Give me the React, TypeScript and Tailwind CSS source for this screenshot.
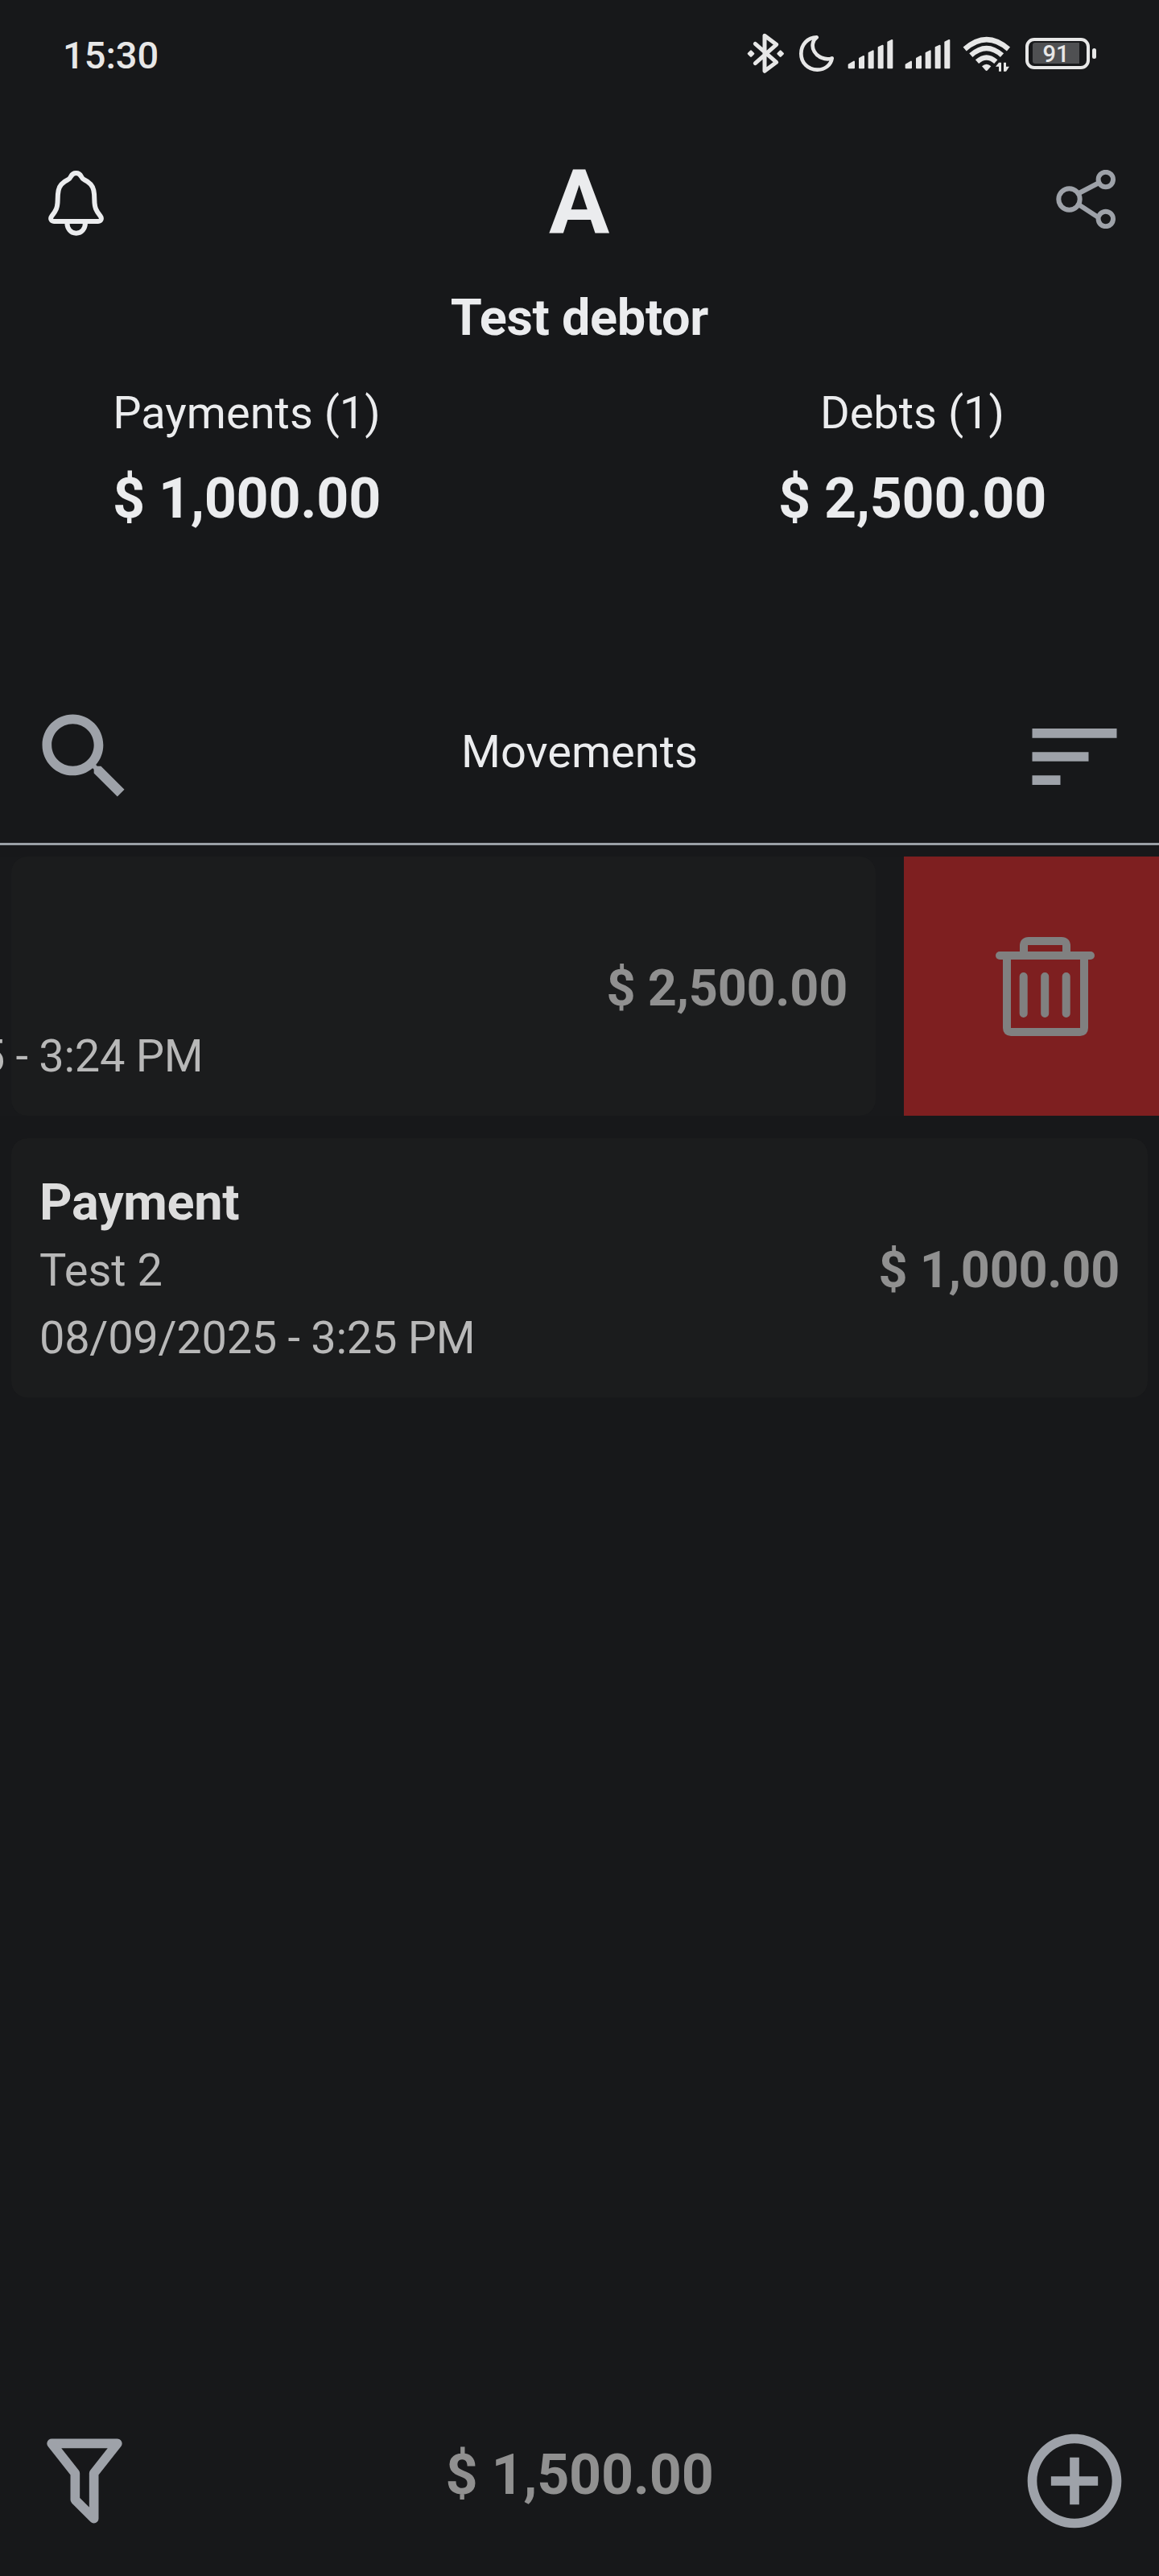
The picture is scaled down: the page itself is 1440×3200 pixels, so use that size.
import type { ReactNode } from "react";

export default function App() {
  return (
    <main className="flex h-[3200px] w-[1440px] flex-col overflow-hidden bg-[#17181a] font-['Roboto',sans-serif] text-[#ebecee]">
      <StatusBar />
      <Header />
      <Toolbar />
      <section className="mt-[14px] flex flex-col gap-7">
        <SwipedMovement />
        <div className="mx-[14px] rounded-[20px] bg-[#1b1c1d]">
          <Movement
            title="Payment"
            note="Test 2"
            date="08/09/2025 - 3:25 PM"
            amount="$ 1,000.00"
          />
        </div>
      </section>
      <Footer />
    </main>
  );
}

function StatusBar() {
  return (
    <div className="flex h-[132px] items-center justify-between pr-[78px] pl-[78px] text-[#e7e7e7]">
      <span className="pt-[5px] text-[47px] leading-none font-medium">15:30</span>
      <div className="flex items-center">
        <BluetoothIcon />
        <MoonIcon />
        <SignalIcon className="ml-4" />
        <SignalIcon className="ml-[14px]" />
        <WifiIcon />
        <Battery />
      </div>
    </div>
  );
}

function Header() {
  return (
    <header>
      <div className="mt-10 flex h-40 items-center justify-between pr-[53px] pl-[60px]">
        <BellIcon />
        <span className="mr-[2px] text-[112px] leading-none font-bold">A</span>
        <ShareIcon />
      </div>
      <h1 className="mt-[21px] text-center text-[63px] leading-[84px] font-bold tracking-[-0.3px]">
        Test debtor
      </h1>
      <div className="mt-[34px] flex justify-between px-[140px]">
        <Total label="Payments (1)" value="$ 1,000.00" />
        <Total label="Debts (1)" value="$ 2,500.00" />
      </div>
    </header>
  );
}

function Total({ label, value }: { label: string; value: string }) {
  return (
    <div className="flex flex-col items-center">
      <p className="text-[56px] leading-[84px]">{label}</p>
      <p className="mt-[14px] text-[70px] leading-[100px] font-bold tracking-[-0.3px]">
        {value}
      </p>
    </div>
  );
}

function Toolbar() {
  return (
    <div className="mt-[201px] flex h-[180px] items-start justify-between border-b-[3px] border-[#9aa0a6] px-[35px] text-[#9ea2a9]">
      <MaterialIcon>
        <path d="M15.5 14h-.79l-.28-.27C15.41 12.59 16 11.11 16 9.5 16 5.91 13.09 3 9.5 3S3 5.91 3 9.5 5.91 16 9.5 16c1.61 0 3.09-.59 4.23-1.57l.27.28v.79l5 4.99L20.49 19l-4.99-5zm-6 0C7.01 14 5 11.99 5 9.5S7.01 5 9.5 5 14 7.01 14 9.5 11.99 14 9.5 14z" />
      </MaterialIcon>
      <h2 className="mt-[22px] text-[56px] leading-[84px] text-[#ebecee]">
        Movements
      </h2>
      <MaterialIcon>
        <path d="M3 18h6v-2H3v2zM3 6v2h18V6H3zm0 7h12v-2H3v2z" />
      </MaterialIcon>
    </div>
  );
}

type MovementProps = {
  title?: string;
  note?: string;
  date: string;
  amount: string;
};

function Movement({ title, note, date, amount }: MovementProps) {
  return (
    <div className="flex h-[322px] items-center justify-between pr-[35px] pl-[35px]">
      <div className="pt-[5px] text-[56px] leading-[84px] text-[#b8b8b8]">
        <p className="h-[84px] text-[63px] font-bold tracking-[-0.3px] text-[#dddddd]">
          {title}
        </p>
        <p className="h-[84px]">{note}</p>
        <p className="tracking-[-0.3px]">{date}</p>
      </div>
      <p className="pt-[5px] text-[63px] leading-[84px] font-bold tracking-[-0.3px] text-[#909090]">
        {amount}
      </p>
    </div>
  );
}

// row dragged to the left, the delete action shows on the right
function SwipedMovement() {
  return (
    <div className="relative flex h-[322px] overflow-hidden bg-[#18191b]">
      <div className="absolute inset-y-0 left-[14px] w-[1074px] rounded-[20px] bg-[#1b1c1d]" />
      <div className="relative -ml-[324px] w-[1412px] shrink-0">
        <Movement date="08/09/2025 - 3:24 PM" amount="$ 2,500.00" />
      </div>
      <div className="ml-[35px] flex w-[317px] shrink-0 items-center bg-[#7e1f20] pl-[114px]">
        <TrashIcon />
      </div>
    </div>
  );
}

function Footer() {
  return (
    <footer className="mt-auto flex h-[188px] items-start justify-between px-[35px] text-[#9ea2a9]">
      <MaterialIcon>
        <path
          d="M5 4h14l-5 6.35V20l-4-4v-5.65z"
          fill="none"
          stroke="currentColor"
          strokeWidth="2"
          strokeLinejoin="round"
        />
      </MaterialIcon>
      <p className="mt-[12px] text-[70px] leading-[100px] font-bold tracking-[-0.3px] text-[#909090]">
        $ 1,500.00
      </p>
      <MaterialIcon>
        <path d="M13 7h-2v4H7v2h4v4h2v-4h4v-2h-4V7zm-1-5C6.48 2 2 6.48 2 12s4.48 10 10 10 10-4.48 10-10S17.52 2 12 2zm0 18c-4.41 0-8-3.59-8-8s3.59-8 8-8 8 3.59 8 8-3.59 8-8 8z" />
      </MaterialIcon>
    </footer>
  );
}

function MaterialIcon({ children }: { children: ReactNode }) {
  return (
    <svg viewBox="0 0 24 24" className="size-[140px] shrink-0" fill="currentColor">
      {children}
    </svg>
  );
}

function BellIcon() {
  return (
    <svg
      viewBox="180 633 207 243"
      className="h-[81px] w-[69px]"
      fill="none"
      stroke="currentColor"
      strokeWidth="18"
      strokeLinejoin="round"
    >
      <path d="M201 822H366C377 822 381 811 374 802C358 782 352 770 352 742C352 725 351 715 349 706C345 688 331 675 314 667C307 664 306 661 303 655C299 647 292 642 283.500 642C275 642 268 647 264 655C261 661 260 664 253 667C236 675 222 688 218 706C216 715 215 725 215 742C215 770 209 782 193 802C186 811 190 822 201 822Z" />
      <path d="M250 826C250 849 263 866 284 866C305 866 318 849 318 826" />
    </svg>
  );
}

function ShareIcon() {
  return (
    <svg
      viewBox="1312 211 75 73"
      className="-mt-[9px] h-[73px] w-[75px]"
      fill="none"
      stroke="#9ea2a9"
      strokeWidth="6"
    >
      <circle cx="1328.500" cy="247.500" r="13.200" />
      <circle cx="1373.800" cy="223" r="9.200" />
      <circle cx="1373.800" cy="272" r="9.200" />
      <path d="M1340.500 240L1365.500 227M1340 254L1366 271" />
    </svg>
  );
}

function TrashIcon() {
  return (
    <svg
      viewBox="1237 1163 123 123"
      className="h-[123px] w-[123px]"
      fill="none"
      stroke="#808080"
      strokeWidth="10"
      strokeLinecap="round"
    >
      <path d="M1242 1186H1355" />
      <path d="M1272 1185V1174Q1272 1168 1278 1168H1319Q1325 1168 1325 1174V1185" />
      <path d="M1251 1187V1276Q1251 1281 1256 1281H1342Q1347 1281 1347 1276V1187" />
      <path d="M1271.700 1212V1258M1298.200 1212V1258M1324.700 1212V1258" />
    </svg>
  );
}

function BluetoothIcon() {
  return (
    <svg
      viewBox="84 60 141 156"
      className="h-[52px] w-[47px]"
      fill="none"
      stroke="currentColor"
      strokeWidth="15"
      strokeLinecap="round"
      strokeLinejoin="round"
    >
      <path d="M115 103L194 172L150 205V73L194 106L115 176" />
      <path
        d="M99 131L108 140L99 149L90 140ZM209 131L218 140L209 149L200 140Z"
        fill="currentColor"
        strokeWidth="8"
      />
    </svg>
  );
}

function MoonIcon() {
  return (
    <svg
      viewBox="276 60 135 156"
      className="ml-[17px] h-[52px] w-[45px]"
      fill="none"
      stroke="currentColor"
      strokeWidth="14"
      strokeLinejoin="round"
    >
      <path d="M344 79C310 79 286 107 286 140C286 174 312 200 346 200C374 200 397 183 401 157C388 162 374 160 362 155C339 146 325 122 330 101C332 92 337 84 344 79Z" />
    </svg>
  );
}

function SignalIcon({ className }: { className: string }) {
  return (
    <svg
      viewBox="459 60 171 156"
      className={`h-[52px] w-[57px] ${className}`}
      fill="currentColor"
      stroke="currentColor"
      strokeWidth="6"
      strokeLinejoin="round"
    >
      <path d="M464 181L483 170V193H464Z" />
      <path d="M504 158L519 150V193H504Z" />
      <path d="M539 138L554 130V193H539Z" />
      <path d="M575 117L590 110V193H575Z" />
      <path d="M610 97L625 90V193H610Z" />
    </svg>
  );
}

function WifiIcon() {
  return (
    <svg
      viewBox="888 60 180 156"
      className="ml-[15px] h-[52px] w-[60px]"
      fill="none"
      stroke="currentColor"
      strokeWidth="19"
    >
      <path d="M896 123Q977 52 1059 123" />
      <path d="M919 146Q977 94 1035 146" />
      <path d="M942 170Q977 139 1012 170" />
      <path d="M960 187Q977 171 994 187L981 202Q977 206 973 202Z" fill="currentColor" stroke="none" />
      <path
        d="M1011 188L1023 173H1032V206H1023V188ZM1041 173H1050V188H1062L1050 206H1041Z"
        fill="currentColor"
        stroke="none"
      />
    </svg>
  );
}

function Battery() {
  return (
    <div className="ml-[18px] flex items-center">
      <div className="flex h-[39px] w-[80px] items-center rounded-[11px] border-4 border-current px-[5px]">
        <div className="flex h-[26px] w-[58px] items-center justify-center rounded-l-[3px] bg-[#4f5052]">
          <span className="pt-[3px] text-[29px] leading-none font-medium">91</span>
        </div>
      </div>
      <div className="ml-[3px] h-[13px] w-[5px] rounded-full bg-current" />
    </div>
  );
}
